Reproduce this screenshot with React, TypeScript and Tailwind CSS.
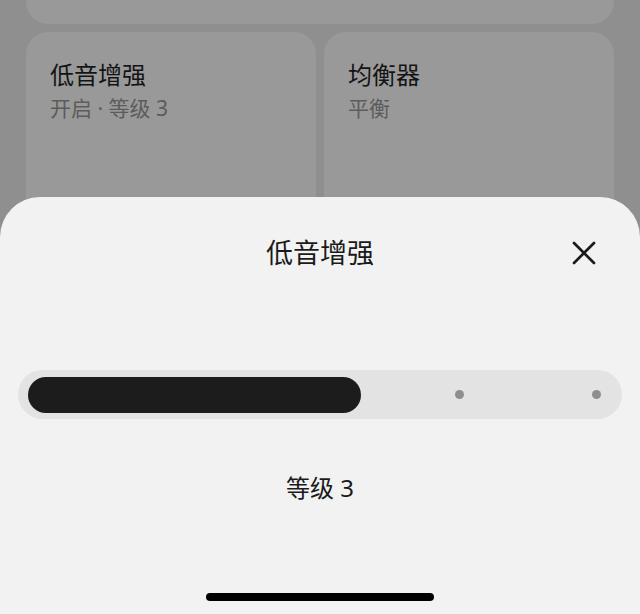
import { X } from 'lucide-react'

// Bass boost bottom sheet over dimmed settings cards.

const FONT = { fontFamily: '"Noto Sans", "Noto Sans CJK SC", sans-serif' }

function Card({ title, sub }: { title: string; sub: string }) {
  return (
    <div className="flex-1 h-[240px] rounded-[22px] bg-[#999999] px-6 pt-[27px]">
      <div className="text-[24px] leading-[32px] text-[#141414]">{title}</div>
      <div className="text-[21px] leading-[34px] text-[#5c5c5c] whitespace-pre">{sub}</div>
    </div>
  )
}

export default function App() {
  const levels = 5
  const current = 3
  return (
    <div className="relative w-[640px] h-[614px] overflow-hidden bg-[#8f8f8f]" style={FONT}>
      <div className="px-[26px]">
        <div className="h-[24px] rounded-b-[22px] bg-[#999999]" />
        <div className="flex gap-2 mt-2">
          <Card title="低音增强" sub="开启 · 等级 3" />
          <Card title="均衡器" sub="平衡" />
        </div>
      </div>

      <div className="absolute left-0 right-0 bottom-0 h-[417px] rounded-t-[40px] bg-[#f2f2f2] flex flex-col">
        <div className="relative h-[112px] flex items-center justify-center">
          <span className="text-[27px] text-[#1a1a1a]">低音增强</span>
          <X className="absolute right-[36px] top-[36px] w-[40px] h-[40px] text-[#1a1a1a]" strokeWidth={1.6} />
        </div>

        <div className="mt-[61px] mx-[18px] h-[49px] rounded-full bg-[#e3e3e3] px-[10px] flex items-center">
          <div className="relative flex-1 h-[36px] flex items-center">
            <div className="h-[36px] w-[333px] rounded-full bg-[#1c1c1c]" />
            <div className="absolute inset-0 flex items-center justify-between pl-[15px] pr-[11px]">
              {Array.from({ length: levels }).map((_, i) => (
                <span
                  key={i}
                  className={i < current ? 'w-[9px] h-[9px]' : 'w-[9px] h-[9px] rounded-full bg-[#8e8e8e]'}
                />
              ))}
            </div>
          </div>
        </div>

        <div className="mt-[54px] text-center text-[24px] leading-[30px] text-[#1a1a1a]">等级 3</div>

        <div className="mt-auto mb-[13px] mx-auto w-[228px] h-[8px] rounded-full bg-black" />
      </div>
    </div>
  )
}
